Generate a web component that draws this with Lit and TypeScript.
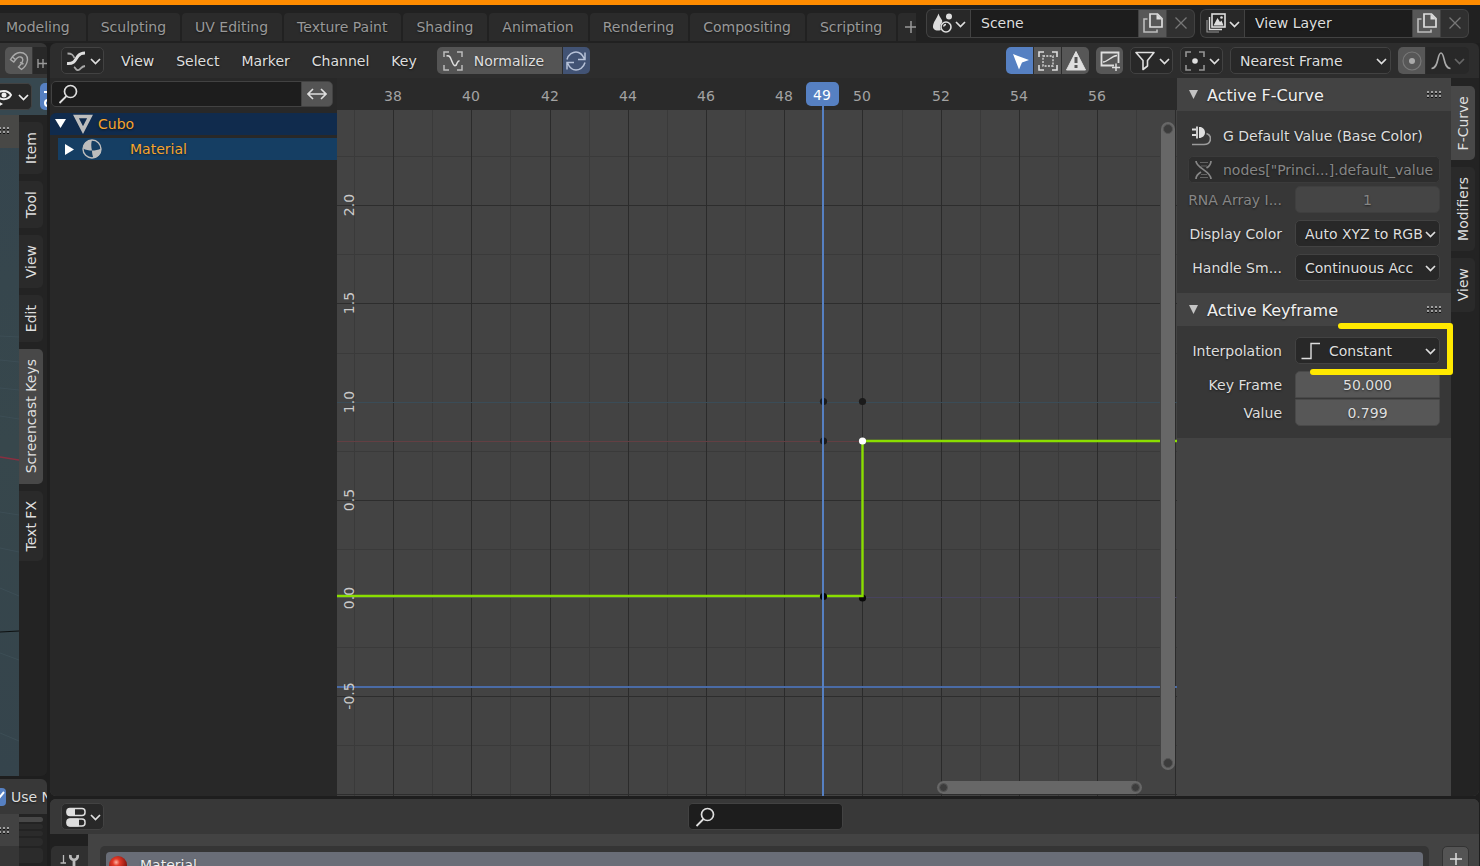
import { LitElement, html, svg, css, nothing } from "lit";
import { customElement, state } from "lit/decorators.js";
import { classMap } from "lit/directives/class-map.js";

const icon = (body: unknown, w = 20, h = 20) =>
  html`<svg class="icon" width=${w} height=${h} viewBox="0 0 ${w} ${h}" fill="none" stroke="currentColor" aria-hidden="true">${body}</svg>`;

const chevron = () => icon(svg`<path d="M1 4 L5.500 8.500 L10 4" stroke-width="1.700"/>`, 11, 11);

const icons = {
  magnet: () => icon(svg`<path stroke-width="1.4" d="M1.5 8.5 C4 4.5 7 1.5 11 1.5 C16 1.5 19 5 18.500 9 C18 12.500 15.500 16.500 12.500 18.500 L9.500 16 C12 13.500 13.800 11 13.800 8.500 C13.500 6 10.500 5 8.500 6.800 C7 8 6 9.500 4.800 11 Z M3.500 6 L6.800 9 M14.500 13 L11 11.500"/>`),
  snapTo: () => icon(svg`<path stroke-width="1.4" d="M1 8 V17 M6 8 V17 M1 12.500 H14 M11 6 V18 M17 8 V17"/>`),
  eye: () => icon(svg`<path stroke-width="2" d="M0 6 C4 0.500 12 0.500 15 6 C12 11.500 4 11.500 0 6 Z"/><circle cx="8" cy="6" r="2.500" fill="currentColor" stroke="none"/><path d="M0 11 L7 15 L0 19 Z" fill="currentColor" stroke="none"/>`),
  gizmo: () => icon(svg`<path stroke-width="2" d="M2 5 H14 M10 1 L14 5 L10 9"/><circle cx="6" cy="16" r="3" stroke-width="2"/>`),
  graphEditor: () => icon(svg`<path stroke-width="3" d="M1 12.500 C9 13 9 9 12 5 C14 2.500 16 2 19 2"/><path stroke-width="1.800" opacity="0.7" d="M1.500 2.500 C6 2.500 7 4 8.500 7"/><path stroke-width="1.800" opacity="0.7" d="M8 16 C10 17 10 20 12.500 19 C15 18 15 15.500 19 15"/>`),
  normalize: () => icon(svg`<path stroke-width="1.500" opacity="0.75" d="M1 6 V1 H6 M14 1 H19 V6 M19 14 V19 H14 M6 19 H1 V14"/><path stroke-width="1.500" d="M3.500 5 C7 4 7.500 7 9 10.500 C10.500 14.500 12 16 13.500 13.500 C14.500 11.500 14.500 9.800 16.500 9.800"/>`),
  refresh: () => icon(svg`<path stroke-width="1.500" d="M1 8.500 C2.500 3 7 1 10 1 C14 1 16.500 3.500 18.500 8 M19 1.500 V8.500 H12 M19 11.500 C17.500 17 13 19 10 19 C6 19 3.500 16.500 1.500 12 M1 18.500 V11.500 H8"/>`),
  cursor: () => icon(svg`<path d="M3 3 L19 9 L12 11.500 L9 18.500 Z" fill="currentColor" stroke="none"/>`),
  onlySelected: () => icon(svg`<path stroke-width="1.600" d="M1 6 V1 H6 M14 1 H19 V6 M19 14 V19 H14 M6 19 H1 V14"/><rect x="5" y="5" width="10" height="10" stroke-width="1.300" stroke-dasharray="2 1.300"/>`),
  warning: () => icon(svg`<path d="M10 0.500 L19.500 19 H0.500 Z" fill="currentColor" stroke="currentColor" stroke-linejoin="round"/><path d="M10 6 V12 M10 14 V17" stroke="#555" stroke-width="3"/>`),
  ghost: () => icon(svg`<path stroke-width="1.800" d="M14 14.500 H1.500 V1.500 H18.500 V12"/><path stroke-width="1.500" d="M3 11 C8 11 11 5 17 4.500 M12 16.500 H20 M16 12.500 V20"/>`),
  filter: () => icon(svg`<path stroke-width="1.600" d="M1 1.500 H19 L12.500 9.500 V15 L8 18.500 V9.500 Z" stroke-linejoin="round"/>`),
  pivot: () => icon(svg`<path stroke-width="1.600" opacity="0.6" d="M1 6 V1 H6 M14 1 H19 V6 M19 14 V19 H14 M6 19 H1 V14"/><circle cx="10" cy="10" r="2.800" fill="currentColor" stroke="none"/>`),
  proportional: () => icon(svg`<circle cx="10" cy="10" r="9" stroke-width="1.200" opacity="0.4"/><circle cx="10" cy="10" r="3" fill="currentColor" stroke="none"/>`),
  falloff: () => icon(svg`<path stroke-width="1.600" d="M0.500 17.500 C8 17.500 6 2 10 2 C14 2 12 17.500 19.500 17.500"/>`),
  scene: () => icon(svg`<path d="M6.500 0.500 C7.500 5 12 7 9.500 10.500 C7.500 12 8 15.500 9 17 C4 18.500 0.500 16.500 1 13 C1.500 8.500 4.500 6 6.500 0.500 Z" fill="currentColor" stroke="none"/><circle cx="17" cy="3.500" r="3" fill="currentColor" stroke="none"/><circle cx="14" cy="14" r="5" stroke-width="1.600"/><path stroke-width="1.400" d="M11.500 13.500 C12 12 13 11.500 14 11.500"/>`),
  layers: () => icon(svg`<rect x="6" y="1" width="13" height="13" stroke-width="1.600"/><path d="M7.500 12.500 L11.500 5 L14 9 L15.500 7.500 L17.500 12.500 Z" fill="currentColor" stroke="none"/><circle cx="15.500" cy="4.500" r="1.300" fill="currentColor" stroke="none"/><path stroke-width="1.400" d="M3.500 4 V16.500 H16"/><path stroke-width="1.200" opacity="0.6" d="M1 7 V19 H13"/>`),
  copy: () => icon(svg`<path stroke-width="1.700" d="M7 1 H14.500 L19 5.500 V14 H7 Z"/><path d="M13.500 1 V6.500 H19 Z" fill="currentColor" stroke="none"/><path stroke-width="1.600" opacity="0.75" d="M4.500 6 H1 V19 H14 V16.500"/>`),
  close: () => icon(svg`<path stroke-width="1.300" d="M4.500 4.500 L15.500 15.500 M15.500 4.500 L4.500 15.500"/>`),
  plus: () => icon(svg`<path stroke-width="1.500" d="M10 4 V16 M4 10 H16"/>`),
  search: () => icon(svg`<circle cx="12.500" cy="7.500" r="6" stroke-width="1.700"/><path stroke-width="1.800" d="M8.500 12 L1.500 19"/>`),
  expand: () => icon(svg`<path stroke-width="1.600" d="M1 10 H19 M6 5 L1 10 L6 15 M14 5 L19 10 L14 15"/>`),
  mesh: () => icon(svg`<path stroke-width="3.600" d="M3 2.500 H17 L10 16 Z"/>`),
  material: () => icon(svg`<circle cx="10" cy="10" r="9" stroke-width="1.400"/><path d="M10 1 C9 4 9 8 10 11.500 C7 11.500 3.500 11 1 9.500 C1 5 5 1 10 1 Z M10 11.500 C13 11.500 16.500 11 19 9.500 C19.500 14 16 19 11.500 19 C10.500 17 10 14 10 11.500 Z" fill="currentColor" stroke="none"/>`),
  plug: () => icon(svg`<path d="M8 1 C11.500 0.500 14 3.500 14 6.500 C14 9.500 11.500 12 8 12 Z" fill="currentColor" stroke="none"/><path stroke-width="1.800" d="M1 3.500 H5 M1 9 H5 M6 0.500 V12.500"/><path stroke-width="1.600" opacity="0.6" d="M15.500 7.500 C19.500 9 20 12 19 15 C18 18 16 18.500 13 18.500 H1"/>`),
  dna: () => icon(svg`<path stroke-width="1.700" d="M2 1 C2 8 17 11 17 19 M17 1 C17 4 15 6.500 12.500 8 M7 12 C4.500 13.500 2 16 2 19"/><path stroke-width="1.200" opacity="0.6" d="M6 2.500 H14 M7 6 H13 M7 14.500 H13 M6 17.500 H14"/>`),
  constant: () => icon(svg`<path stroke-width="1.400" d="M0.500 17.500 H10 V2.500 H19"/>`),
  properties: () => icon(svg`<rect x="1" y="1.500" width="18" height="7" rx="3" stroke-width="1.500"/><path d="M4 1.500 H8.500 V8.500 H4 Q1 8.500 1 5 Q1 1.500 4 1.500 Z" fill="currentColor"/><rect x="1" y="12" width="18" height="7" rx="3" stroke-width="1.500"/><path d="M4 12 H12.500 V19 H4 Q1 19 1 15.500 Q1 12 4 12 Z" fill="currentColor"/>`),
  tool: () => icon(svg`<path stroke-width="1.300" d="M0.500 9 H6 M3.500 1 V9"/><path stroke-width="2.800" d="M10.500 1 C9 7.500 19 7.500 17.500 1 M14 6 V20"/>`),
};

const FRAME = 39.1;
const frameX = (f: number) => Math.round(525.4 + (f - 50) * FRAME);
const valueY = (v: number) => Math.round(520 - v * 196.4);

@customElement("app-root")
export class AppRoot extends LitElement {
  @state() private workspace = "";
  @state() private leftTab = "Screencast Keys";
  @state() private rightTab = "F-Curve";

  static styles = css`
    :host {
      display: flex; flex-direction: column; height: 100vh; overflow: hidden;
      background: #1e1e1e; color: #dedede;
      font: 14px/18px "DejaVu Sans", sans-serif;
      border-top: 5px solid #ff8c00; box-sizing: border-box;
    }
    *, *::before { box-sizing: border-box; }
    button, input, select { font: inherit; color: inherit; margin: 0; border: 0; padding: 0; background: none; border-radius: 0; outline: none; text-shadow: inherit; }
    button { display: flex; align-items: center; justify-content: center; white-space: nowrap; }
    .icon { flex: none; display: block; }
    .topbar, .header, .channels, .props { text-shadow: 0 1px 2px #00000080; }

    .topbar { flex: none; display: flex; align-items: center; height: 38px; padding: 0 12px 2px 0; gap: 7px; background: #212121; }
    .workspaces { flex: 1; min-width: 0; align-self: flex-end; display: flex; gap: 2px; overflow: hidden; margin-right: 4px; }
    .workspaces button { flex: none; height: 28px; padding: 0 14px 0 13px; background: #2b2b2b; color: #999; border-radius: 4px 4px 0 0; }
    .workspaces button:first-child { padding: 0 16px 0 6px; border-top-left-radius: 0; }
    .workspaces button.add { padding: 0 3px; }
    .workspaces button.on { background: #424242; color: #fff; }

    .group { display: flex; gap: 1px; height: 27px; flex: none; border-radius: 5px; overflow: hidden; }
    .block { box-shadow: 0 0 0 1px #424242; height: 27px; background: #424242; }
    .group button { width: 27px; background: #575757; }
    .group button.menu { width: 43px; background: #282828; gap: 3px; }
    .group button.dim { background: #303030; color: #777; }
    .group input { width: 167px; background: #1d1d1d; padding: 0 10px; }
    .group button.blue { background: #5680c2; color: #fff; }
    .group button.mutedblue { background: #425374; color: #b7c2d8; }
    .group button.wide { width: 125px; justify-content: flex-start; padding-left: 6px; gap: 11px; background: #545454; }
    .group button.muted { color: #aaa; }

    .menu { flex: none; gap: 4px; width: 43px; height: 27px; padding-left: 1px; background: #282828; border: 1px solid #424242; border-radius: 5px; }
    .group .menu { border: 0; border-radius: 0; }

    .main { flex: 1; min-height: 0; display: flex; gap: 3px; padding-right: 1px; }

    .left { flex: none; width: 47px; display: flex; flex-direction: column; gap: 3px; overflow: hidden; }
    .area { flex: 1; min-height: 0; display: flex; flex-direction: column; overflow: hidden; border-radius: 0 6px 6px 0; }
    .left .header { padding: 0 0 0 5px; background: #363636; }
    .left .group .half { background: #282828; color: #999; justify-content: flex-start; padding-left: 4px; }
    .left .group .mag { color: #aaa; background: #555; }
    .overlaybar { flex: none; height: 37px; display: flex; align-items: center; gap: 8px; background: #374850; overflow: hidden; }
    .overlaybar button { flex: none; height: 27px; }
    .overlaybar .eye { width: 32px; gap: 2px; justify-content: flex-start; background: #282828; border: 1px solid #424242; border-left: 0; border-radius: 0 5px 5px 0; color: #eee; }
    .overlaybar .eye .icon:first-child { margin: 4px 0 0 -4px; }
    .overlaybar .giz { width: 27px; background: #5680c2; border-radius: 5px; justify-content: flex-start; padding-left: 2px; color: #fff; }
    .view { flex: 1; min-height: 0; display: flex; background: #232323; }
    .scene { width: 19px; flex: none; background: linear-gradient(#35454e, #37474c 50%, #35444c); display: flex; flex-direction: column; }
    .scene svg.lines { display: block; flex: 1; min-height: 0; width: 19px; }
    .npanel { flex: none; height: 33px; background: #484846; padding-top: 12px; }
    .npanel .icon, .minileft .icon { margin-left: -5px; }

    .tabs { flex: none; display: flex; flex-direction: column; gap: 7px; padding-top: 7px; align-items: flex-start; width: 28px; background: #232323; }
    .tabs button { width: 24px; padding: 10px 0; background: #2a2a2a; border-radius: 0 5px 5px 0; flex: none; }
    .tabs button.on { background: #484848; }
    .tabs span { writing-mode: vertical-rl; transform: rotate(180deg); }

    .mini { flex: none; height: 87px; overflow: hidden; background: #232323; border-top-right-radius: 6px; }
    .mini .header { padding: 0; background: #383838; gap: 4px; }
    .mini label { white-space: nowrap; }
    .check { appearance: none; flex: none; width: 18px; height: 18px; margin-left: -12px; background: #5680c2; border-radius: 4px; display: grid; }
    .checkwrap { display: grid; flex: none; align-items: center; width: 6px; margin-right: 1px; }
    .checkwrap > * { grid-area: 1 / 1; }
    .checkwrap .icon { margin-left: -9px; pointer-events: none; color: #fff; }
    .minibody { display: flex; height: 52px; }
    .minileft { width: 19px; background: linear-gradient(#424242 32px, #363636 32px); padding-top: 13px; }
    .stack { width: 24px; display: flex; flex-direction: column; gap: 2px; padding-top: 3px; }
    .stack i { height: 5px; background: #2b2b2b; border-radius: 0 4px 4px 0; }
    .stack i:first-child { background: #484848; }
    .stack i:nth-child(4) { height: 8px; }
    .stack i:nth-child(5) { height: 15px; }

    .right { flex: 1; min-width: 0; display: flex; flex-direction: column; gap: 3px; }
    .header { flex: none; height: 35px; display: flex; align-items: center; gap: 7px; background: #2d2d2d; padding: 0 10px 0 11px; }
    .right .area { border-radius: 6px; }
    nav { display: flex; margin: 0 2px 0 -1px; }
    nav button { padding: 0 11px; height: 27px; }
    .grow { flex: 1; }
    .body { flex: 1; min-height: 0; display: flex; background: #434343; }

    .pick { display: grid; align-items: center; min-width: 0; }
    .pick > * { grid-area: 1 / 1; }
    .pick select { appearance: none; width: 100%; height: 27px; padding-left: 9px; background: #282828; border: 1px solid #424242; border-radius: 5px; }
    .pick .icon { justify-self: end; margin-right: 4px; pointer-events: none; }
    .pick .lead { justify-self: start; }
    .pick .lead .icon { margin: 0 0 0 6px; }
    .pick.withicon select { padding-left: 33px; }
    .snap { width: 161px; flex: none; }
    .faint { color: #666; }

    .channels { flex: none; width: 287px; background: #282828; }
    .search { display: flex; margin: 3px 4px 6px 1px; height: 26px; gap: 1px; border: 1px solid #424242; border-radius: 5px; overflow: hidden; background: #424242; }
    .field { display: grid; align-items: center; flex: 1; }
    .field > * { grid-area: 1 / 1; }
    .field input { width: 100%; height: 100%; background: #1d1d1d; padding-left: 32px; }
    .field .icon { margin-left: 6px; pointer-events: none; }
    .search button { width: 30px; background: #545454; }
    .channel { display: flex; align-items: center; height: 22px; color: #f7a42c; background: #102b4d; margin-bottom: 3px; padding-left: 5px; gap: 7px; border-top-left-radius: 6px; }
    .channel .icon { color: #bdbdbd; }
    .channel .icon:first-child { color: #fff; }
    .channel .name { margin-left: -2px; }
    .channel.sub { margin-left: 8px; background: #153e63; border-radius: 0; gap: 8px; }
    .channel.sub .name { margin-left: 20px; }

    .graph { flex: 1; min-width: 0; position: relative; overflow: hidden; }
    .plot { display: block; width: 100%; height: 100%; }
    .ruler { fill: #a3a3a3; }
    .values { fill: #cacaca; }
    .vstrip { position: absolute; right: 2px; top: 34px; bottom: 2px; width: 15px; background: #434343; }
    .bar { position: absolute; background: #676767; border-radius: 7px; display: flex; justify-content: space-between; padding: 2px; }
    .bar.v { right: 2px; top: 44px; bottom: 26px; width: 14px; flex-direction: column; }
    .bar.h { right: 35px; bottom: 2px; height: 13px; width: 205px; }
    .bar i { width: 10px; height: 10px; border-radius: 5px; background: #3c3c3c; border: 1px solid #555; }
    .bar.h i { width: 9px; height: 9px; }

    .props { flex: none; width: 274px; }
    .props h2 { margin: 0; height: 33px; display: flex; align-items: center; gap: 8px; padding: 2px 9px 0 11px; font-size: 16px; font-weight: 400; color: #f0f0f0; background: #434343; }
    .props h2 .icon { margin-bottom: 2px; }
    .panel { background: #373737; padding: 11px 11px 12px; display: flex; flex-direction: column; gap: 7px; }
    .row { display: grid; grid-template-columns: 94px 1fr; gap: 13px; align-items: center; position: relative; }
    .row label { text-align: right; white-space: nowrap; }
    .title { display: flex; align-items: center; height: 27px; gap: 12px; padding-left: 3px; white-space: nowrap; }
    .tight { display: flex; flex-direction: column; gap: 3px; }
    .tight.one { gap: 1px; }
    .num { width: 100%; height: 27px; text-align: center; background: #575757; border: 1px solid #494949; border-radius: 5px; min-width: 0; }
    .one .row:first-child .num { border-radius: 5px 5px 0 0; }
    .one .row:last-child .num { border-radius: 0 0 5px 5px; }
    .off { color: #868686; }
    .off .num { background: #454545; border-color: #3f3f3f; }
    .path input { height: 27px; background: #2d2d2d; border: 1px solid #3b3b3b; border-radius: 5px; padding-left: 34px; }
    .mark { position: absolute; left: 121px; top: -50px; pointer-events: none; }
    .right .tabs { width: 28px; padding-top: 8px; }

    .bottom { flex: none; height: 67px; overflow: hidden; border-radius: 6px 6px 0 0; background: #434343; }
    .bottom .header { background: #383838; display: grid; grid-template-columns: 1fr 155px 1fr; gap: 0; }
    .find { height: 27px; border: 1px solid #424242; border-radius: 5px; overflow: hidden; }
    .slots { display: flex; height: 32px; }
    .rail { flex: none; width: 38px; padding: 12px 0 0 1px; background: #202020; }
    .rail button { width: 37px; height: 40px; background: #303030; border-radius: 5px 0 0 0; align-items: flex-start; padding-top: 8px; color: #bbb; }
    .list { flex: 1; margin: 12px 13px 0 12px; height: 60px; padding: 6px; background: #353535; border-radius: 5px 5px 0 0; }
    .slot { width: 100%; height: 26px; justify-content: flex-start; gap: 12px; background: #696d77; border-radius: 4px; color: #eee; padding-left: 2px; text-shadow: 0 1px 2px #00000080; }
    .addslot { width: 27px; height: 40px; margin: 12px 10px 0 0; background: #545454; border: 1px solid #333; border-radius: 5px 5px 0 0; align-items: flex-start; padding-top: 2px; }
  `;

  private grip() {
    return html`<svg class="icon" width="15" height="8" aria-hidden="true">
      ${[0, 4, 8, 12].map((x) => svg`<rect x=${x} y="0" width="2" height="2" fill="#a0a0a0"/><rect x=${x} y="4" width="2" height="2" fill="#a0a0a0"/><rect x=${x} y="2" width="2" height="1" fill="#111"/><rect x=${x} y="6" width="2" height="1" fill="#111"/>`)}
    </svg>`;
  }

  private idBlock(name: string, label: string, glyph: unknown) {
    return html`<div class="group block">
      <button class="menu" aria-label="Browse ${label}">${glyph}${chevron()}</button>
      <input aria-label=${label} .value=${name} />
      <button aria-label="New ${label}">${icons.copy()}</button>
      <button class="dim" aria-label="Remove ${label}">${icons.close()}</button>
    </div>`;
  }

  private tabs(names: string[], active: string, pick: (n: string) => void) {
    return html`<div class="tabs">${names.map(
      (n) => html`<button class=${classMap({ on: n === active })} @click=${() => pick(n)}><span>${n}</span></button>`
    )}</div>`;
  }

  private pick(id: string, value: string, label?: string, lead?: unknown) {
    return html`<div class=${classMap({ pick: true, withicon: !!lead })}>
      <select id=${id} aria-label=${label ?? nothing}><option>${value}</option></select>
      ${lead ? html`<span class="lead">${lead}</span>` : nothing}${chevron()}
    </div>`;
  }

  private plot() {
    const frames = Array.from({ length: 60 }, (_, i) => 37 + i);
    const values = Array.from({ length: 17 }, (_, i) => 2.25 - i * 0.25);
    const dot = (f: number, y: number, color: string) => svg`<circle cx=${frameX(f) + 0.5} cy=${y} r="3.600" fill=${color}/>`;
    return html`<svg class="plot" aria-label="F-Curve graph">
      <g shape-rendering="crispEdges">
        ${frames.filter((f) => f % 2).map((f) => svg`<rect x=${frameX(f)} y="32" width="1" height="100%" fill="#3a3a3a"/>`)}
        ${values.filter((v) => v !== 0 && v !== 1).map((v) => svg`<rect x="0" y=${valueY(v)} width="100%" height="1" fill=${v % 0.5 ? "#3a3a3a" : "#2d2d2d"}/>`)}
        ${frames.filter((f) => f % 2 === 0).map((f) => svg`<rect x=${frameX(f)} y="32" width="1" height="100%" fill="#2b2b2b"/>`)}
        <rect x="0" y="324" width="100%" height="1" fill="#3a4c57"/>
        <rect x="0" y="363" width="525" height="1" fill="#633f43"/>
        <rect x="0" y="519" width="100%" height="1" fill="#47435e"/>
        <rect x="0" y="608" width="100%" height="2" fill="#4a6ba6"/>
        <rect x="0" y="0" width="100%" height="32" fill="#2a2a2a"/>
      </g>
      ${dot(49, 323.5, "#1b1b1b")}${dot(50, 323.5, "#1b1b1b")}${dot(49, 363, "#1b1b1b")}${dot(50, 520, "#0a0a0a")}
      <path d="M0 518 H525.500 V363 H4000" fill="none" stroke="#8ade00" stroke-width="2.400"/>
      ${dot(49, 518.5, "#050505")}
      <rect x="485" y="20" width="2" height="100%" fill="#5680c2"/>
      ${dot(50, 363, "#fff")}
      <g class="ruler" text-anchor="middle">
        ${frames.filter((f) => f % 2 === 0 && f < 58).map((f) => svg`<text x=${frameX(f)} y="23">${f}</text>`)}
      </g>
      <rect x="469" y="4" width="33" height="24" rx="5" fill="#5680c2"/>
      <text x="485" y="22" text-anchor="middle" fill="#fff">49</text>
      <g class="values" text-anchor="middle">
        ${[2, 1.5, 1, 0.5, 0, -0.5].map((v) => svg`<text transform="translate(17 ${valueY(v)}) rotate(-90)">${v.toFixed(1)}</text>`)}
      </g>
    </svg>`;
  }

  private heading(text: string) {
    return html`<h2>
      <svg class="icon" width="11" height="10" aria-hidden="true"><path d="M1 0 H10 L5.500 9 Z" fill="#c4c4c4"/></svg>
      <span>${text}</span><span class="grow"></span>${this.grip()}
    </h2>`;
  }

  render() {
    const spaces = ["Modeling", "Sculpting", "UV Editing", "Texture Paint", "Shading", "Animation", "Rendering", "Compositing", "Scripting"];
    return html`
      <header class="topbar">
        <div class="workspaces">
          ${spaces.map((n) => html`<button class=${classMap({ on: n === this.workspace })} @click=${() => (this.workspace = n)}>${n}</button>`)}
          <button class="add" aria-label="Add workspace">${icons.plus()}</button>
        </div>
        ${this.idBlock("Scene", "Scene", icons.scene())}
        ${this.idBlock("View Layer", "View layer", icons.layers())}
      </header>

      <div class="main">
        <aside class="left">
          <section class="area">
            <div class="header">
              <div class="group">
                <button class="mag" aria-label="Snap">${icons.magnet()}</button>
                <button class="half" aria-label="Snap to">${icons.snapTo()}</button>
              </div>
            </div>
            <div class="overlaybar">
              <button class="eye" aria-label="Object visibility">${icons.eye()}${chevron()}</button>
              <button class="giz" aria-label="Gizmos">${icons.gizmo()}</button>
            </div>
            <div class="view">
              <div class="scene">
                <div class="npanel">${this.grip()}</div>
                <svg class="lines" aria-hidden="true" fill="none">
                  <path stroke="#3d4e55" d="M0 188 L19 189 M0 212 L19 214 M0 240 L19 242 M0 268 L19 271 M0 364 L19 367 M0 400 L19 404 M0 440 L19 448 M0 505 L19 512 M0 585 L19 593"/>
                  <path stroke="#8a2f40" stroke-width="1.500" d="M0 309 L19 312"/>
                  <path stroke="#0e1112" stroke-width="1.200" d="M0 484 L19 483"/>
                </svg>
              </div>
              ${this.tabs(["Item", "Tool", "View", "Edit", "Screencast Keys", "Text FX"], this.leftTab, (n) => (this.leftTab = n))}
            </div>
          </section>
          <section class="mini">
            <div class="header">
              <span class="checkwrap">
                <input class="check" id="nodes" type="checkbox" checked />
                ${icon(svg`<path stroke-width="2" d="M2 7 L6 10.500 L13 2"/>`, 14, 14)}
              </span>
              <label for="nodes">Use Nodes</label>
            </div>
            <div class="minibody">
              <div class="minileft">${this.grip()}</div>
              <div class="stack"><i></i><i></i><i></i><i></i><i></i></div>
            </div>
          </section>
        </aside>

        <main class="right">
          <section class="area">
            <div class="header">
              <button class="menu" aria-label="Editor type">${icons.graphEditor()}${chevron()}</button>
              <nav>${["View", "Select", "Marker", "Channel", "Key"].map((n) => html`<button>${n}</button>`)}</nav>
              <div class="group">
                <button class="wide">${icons.normalize()}Normalize</button>
                <button class="mutedblue" aria-label="Auto normalization">${icons.refresh()}</button>
              </div>
              <span class="grow"></span>
              <div class="group">
                <button class="blue" aria-label="Only show selected">${icons.cursor()}</button>
                <button aria-label="Show hidden">${icons.onlySelected()}</button>
                <button aria-label="Only show errors">${icons.warning()}</button>
              </div>
              <div class="group"><button aria-label="Ghost curves">${icons.ghost()}</button></div>
              <button class="menu" aria-label="Filters">${icons.filter()}${chevron()}</button>
              <button class="menu" aria-label="Pivot point">${icons.pivot()}${chevron()}</button>
              <div class="snap">${this.pick("snap", "Nearest Frame", "Auto snap")}</div>
              <div class="group">
                <button class="muted" aria-label="Proportional editing">${icons.proportional()}</button>
                <button class="menu muted" aria-label="Falloff">${icons.falloff()}<span class="faint">${chevron()}</span></button>
              </div>
            </div>
            <div class="body">
              <div class="channels">
                <div class="search">
                  <div class="field"><input type="text" aria-label="Filter channels" />${icons.search()}</div>
                  <button aria-label="Invert filter">${icons.expand()}</button>
                </div>
                <div class="channel">
                  ${icon(svg`<path d="M0 0 H11 L5.500 9 Z" fill="currentColor" stroke="none"/>`, 11, 11)}
                  ${icons.mesh()}<span class="name">Cubo</span>
                </div>
                <div class="channel sub">
                  ${icon(svg`<path d="M2 0 L11 5.500 L2 11 Z" fill="currentColor" stroke="none"/>`, 11, 11)}
                  ${icons.material()}<span class="name">Material</span>
                </div>
              </div>
              <div class="graph">
                ${this.plot()}
                <div class="vstrip"></div>
                <div class="bar v"><i></i><i></i></div>
                <div class="bar h"><i></i><i></i></div>
              </div>
              <div class="props">
                ${this.heading("Active F-Curve")}
                <div class="panel">
                  <div class="title">${icons.plug()}<span>G Default Value (Base Color)</span></div>
                  <div class="tight off">
                    <div class="field path"><input type="text" aria-label="Data path" .value=${'nodes["Princi...].default_value'} />${icons.dna()}</div>
                    <div class="row"><label for="rna">RNA Array I...</label><input class="num" id="rna" .value=${"1"} /></div>
                  </div>
                  <div class="row"><label for="color">Display Color</label>${this.pick("color", "Auto XYZ to RGB")}</div>
                  <div class="row"><label for="smooth">Handle Sm...</label>${this.pick("smooth", "Continuous Acc")}</div>
                </div>
                ${this.heading("Active Keyframe")}
                <div class="panel">
                  <div class="row">
                    <label for="interp">Interpolation</label>${this.pick("interp", "Constant", undefined, icons.constant())}
                  </div>
                  <div class="tight one">
                    <div class="row"><label for="frame">Key Frame</label><input class="num" id="frame" .value=${"50.000"} />
                      <svg class="mark" width="148" height="60" aria-hidden="true"><path d="M32 5 H141 V51 H4" fill="none" stroke="#ffe900" stroke-width="6" stroke-linecap="round" stroke-linejoin="round"/></svg>
                    </div>
                    <div class="row"><label for="value">Value</label><input class="num" id="value" .value=${"0.799"} /></div>
                  </div>
                </div>
              </div>
              ${this.tabs(["F-Curve", "Modifiers", "View"], this.rightTab, (n) => (this.rightTab = n))}
            </div>
          </section>

          <section class="bottom">
            <div class="header">
              <button class="menu" aria-label="Editor type">${icons.properties()}${chevron()}</button>
              <div class="field find"><input type="text" aria-label="Search properties" />${icons.search()}</div>
            </div>
            <div class="slots">
              <div class="rail"><button aria-label="Tool">${icons.tool()}</button></div>
              <div class="list">
                <button class="slot">
                  <svg class="icon" width="20" height="20" aria-hidden="true"><defs><radialGradient id="ball" cx="0.4" cy="0.35" r="0.650"><stop offset="0" stop-color="#ffb0a0"/><stop offset="0.3" stop-color="#e23a28"/><stop offset="1" stop-color="#7c0f0a"/></radialGradient></defs><circle cx="10" cy="10" r="9" fill="url(#ball)"/></svg>
                  Material
                </button>
              </div>
              <button class="addslot" aria-label="Add material slot">${icons.plus()}</button>
            </div>
          </section>
        </main>
      </div>
    `;
  }
}
